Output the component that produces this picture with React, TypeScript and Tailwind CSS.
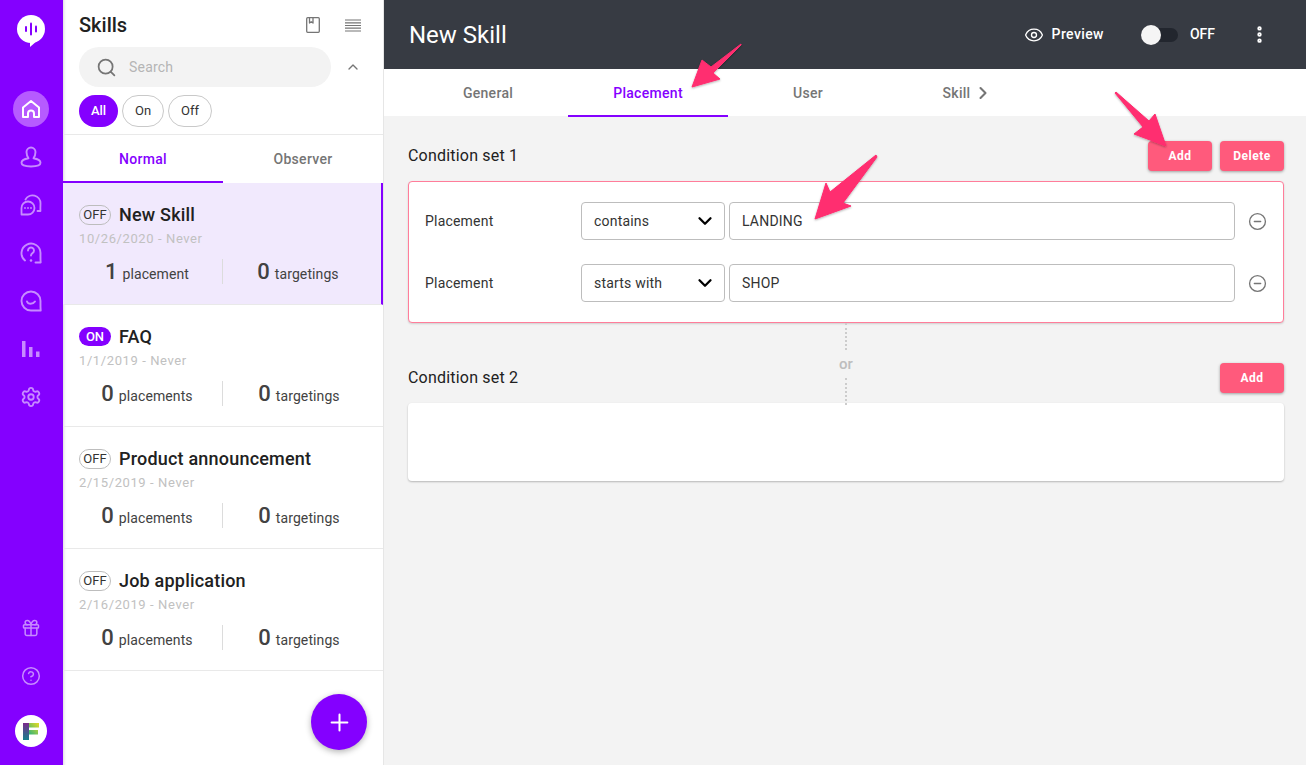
import { ChevronDown, ChevronRight, ChevronUp, CircleHelp, Eye, Gift, MinusCircle, MoreVertical, Plus, Search, Settings } from "lucide-react";

const skills = [
  { name: "New Skill", status: "OFF", dates: "10/26/2020 - Never", label: "placement", count: 1, active: true },
  { name: "FAQ", status: "ON", dates: "1/1/2019 - Never", label: "placements", count: 0, active: false },
  { name: "Product announcement", status: "OFF", dates: "2/15/2019 - Never", label: "placements", count: 0, active: false },
  { name: "Job application", status: "OFF", dates: "2/16/2019 - Never", label: "placements", count: 0, active: false },
];

function HomeIcon() {
  return (
    <svg width="20" height="20" viewBox="0 0 20 20" fill="none" stroke="white" strokeWidth="2" strokeLinejoin="round">
      <path d="M2 8.500 10 2l8 6.500V18h-5v-3.500a3 3 0 0 0-6 0V18H2z" />
    </svg>
  );
}

function UserIcon() {
  return (
    <svg width="22" height="22" viewBox="0 0 22 22" fill="none" stroke="#c78bff" strokeWidth="1.900" strokeLinejoin="round">
      <path d="M6.500 6a4.500 4.500 0 0 1 9 0c0 2.500-.8 4.500-2 6.200 3.500.6 7 1.800 7 4.600 0 2.200-3 3.700-9.500 3.700s-9.500-1.500-9.500-3.700c0-2.800 3.500-4 7-4.600-1.200-1.700-2-3.700-2-6.200z" />
    </svg>
  );
}

function ChatsIcon() {
  return (
    <svg width="22" height="22" viewBox="0 0 22 22" fill="none" stroke="#c78bff" strokeWidth="1.800" strokeLinecap="round" strokeLinejoin="round">
      <path d="M5.500 5.500a8 8 0 0 1 15 4c0 2.500-.3 5 0 7.500h-3" />
      <path d="M8 7.500a6.500 6.500 0 1 1 0 13H1.500v-6.500A6.500 6.500 0 0 1 8 7.500z" />
      <path d="M5 14h.01M8 14h.01M11 14h.01" strokeWidth="1.800" />
    </svg>
  );
}

function QuestionBubbleIcon() {
  return (
    <svg width="22" height="22" viewBox="0 0 22 22" fill="none" stroke="#c78bff" strokeWidth="1.900" strokeLinecap="round" strokeLinejoin="round">
      <path d="M5 18.500A9.500 9.500 0 1 1 20.500 11c0 3-.2 6 .2 9.500H15.500" />
      <path d="M8 8.500a3 3 0 1 1 4.500 2.600c-1 .6-1.500 1.200-1.500 2.400" />
      <path d="M11 18.500h.01" strokeWidth="2.600" />
    </svg>
  );
}

function SmileBubbleIcon() {
  return (
    <svg width="22" height="22" viewBox="0 0 22 22" fill="none" stroke="#c78bff" strokeWidth="1.900" strokeLinecap="round" strokeLinejoin="round">
      <path d="M11 20.500A9.500 9.500 0 1 1 20.500 11c0 3-.2 6 .2 9.500z" />
      <path d="M7 11.500c1 3 6 3 8 0" />
    </svg>
  );
}

function BarsIcon() {
  return (
    <svg width="18" height="16" viewBox="0 0 18 16" fill="#c78bff">
      <rect x="0" y="0" width="3.500" height="16" />
      <rect x="7" y="6" width="3.500" height="10" />
      <rect x="14" y="10.500" width="3.500" height="5.500" />
    </svg>
  );
}

function NotebookIcon() {
  return (
    <svg width="14" height="16" viewBox="0 0 14 16" fill="none" stroke="#757575" strokeWidth="1.300">
      <rect x="0.700" y="0.700" width="12.600" height="14.600" rx="1" />
      <path d="M3.500 1v5l1.700-1.300L7 6V1" strokeLinejoin="round" />
    </svg>
  );
}

function LinesIcon() {
  return (
    <svg width="16" height="13" viewBox="0 0 16 13" stroke="#757575" strokeWidth="1.200">
      <path d="M0 1h16M0 3.800h16M0 6.500h16M0 9.200h16M0 12h16" />
    </svg>
  );
}

function Arrows() {
  return (
    <svg className="absolute left-0 top-0 pointer-events-none" width="1306" height="765" viewBox="0 0 1306 765">
      <defs>
        <filter id="arrowShadow" x="-20%" y="-20%" width="140%" height="140%">
          <feDropShadow dx="0" dy="1" stdDeviation="1.200" floodColor="#000" floodOpacity="0.3" />
        </filter>
      </defs>
      <g fill="#ff2d6f" filter="url(#arrowShadow)" stroke="#ff2d6f" strokeWidth="1" strokeLinejoin="round">
        <path d="M741 44 711 67 702 60 692 87 720 79 713 73 741 45z" />
        <path d="M1115 93 1143 127 1134 134 1166 146 1155 114 1149 121 1116 92z" />
        <path d="M876 155 830 192 826 183 815 219 851 206 843 203 877 157z" />
      </g>
    </svg>
  );
}

function ConditionRow({ op, value }: { op: string; value: string }) {
  return (
    <div className="flex items-center h-[38px]">
      <div className="w-[156px] text-[14px] tracking-[0.2px] text-[#333]">Placement</div>
      <div className="w-[144px] h-[38px] border border-[#bdbdbd] rounded-[4px] bg-white flex items-center justify-between pl-3 pr-[8px] text-[14px] tracking-[0.2px] text-[#333]">
        {op}
        <ChevronDown className="w-[22px] h-[22px] text-black" strokeWidth={2.500} />
      </div>
      <div className="ml-1 w-[506px] h-[38px] border border-[#bdbdbd] rounded-[4px] bg-white flex items-center pl-3 text-[14px] tracking-[0.2px] text-[#333]">
        {value}
      </div>
      <MinusCircle className="ml-[13px] w-[19px] h-[19px] text-[#757575]" strokeWidth={1.700} />
    </div>
  );
}

function PinkButton({ label }: { label: string }) {
  return (
    <button className="w-[64px] h-[30px] rounded-[4px] bg-[#ff5a7c] text-white text-[12px] font-bold tracking-[0.5px] shadow-[0_1px_3px_rgba(0,0,0,0.35)]">
      {label}
    </button>
  );
}

export default function App() {
  return (
    <div className="relative flex w-[1306px] h-[765px] overflow-hidden bg-[#f3f3f3] font-['Roboto',sans-serif]">
      {/* rail */}
      <nav className="w-[63px] shrink-0 bg-[#8400ff] pr-px flex flex-col items-center">
        <div className="mt-[15px]">
          <svg width="28" height="32" viewBox="0 0 28 32">
            <circle cx="14" cy="14" r="14" fill="white" />
            <path d="M13 26v6l8-7z" fill="white" />
            <rect x="8" y="11" width="2" height="6" rx="1" fill="#8400ff" />
            <rect x="13" y="7.500" width="2" height="13" rx="1" fill="#8400ff" />
            <rect x="18" y="10.500" width="2" height="7" rx="1" fill="#8400ff" />
          </svg>
        </div>
        <div className="mt-[44px] w-9 h-9 rounded-full bg-[#b65bff] flex items-center justify-center">
          <HomeIcon />
        </div>
        <div className="mt-[19px] flex flex-col items-center gap-[26px]">
          <UserIcon />
          <ChatsIcon />
          <QuestionBubbleIcon />
          <SmileBubbleIcon />
          <div className="h-[22px] flex items-center">
            <BarsIcon />
          </div>
          <Settings className="w-[22px] h-[22px] text-[#c78bff]" strokeWidth={2} />
        </div>
        <div className="mt-auto flex flex-col items-center">
          <Gift className="w-[20px] h-[20px] text-[#c78bff]" strokeWidth={1.800} />
          <CircleHelp className="mt-[28px] w-[20px] h-[20px] text-[#c78bff]" strokeWidth={1.800} />
          <div className="mt-[29px] mb-[18px] w-8 h-8 rounded-full bg-white flex items-center justify-center">
            <svg width="16" height="17" viewBox="0 0 16 17">
              <defs>
                <linearGradient id="logoStem" x1="0" y1="0" x2="0" y2="1">
                  <stop offset="0" stopColor="#7a2a8c" />
                  <stop offset="1" stopColor="#14808c" />
                </linearGradient>
                <linearGradient id="logoArm" x1="0" y1="1" x2="1" y2="0">
                  <stop offset="0" stopColor="#2fb37a" />
                  <stop offset="1" stopColor="#e8dc22" />
                </linearGradient>
              </defs>
              <path d="M6 0h10v4.500H6V7h9v4.500H6z" fill="url(#logoArm)" />
              <path d="M0 0h6v17H0z" fill="url(#logoStem)" />
            </svg>
          </div>
        </div>
      </nav>

      {/* skills list */}
      <aside className="relative w-[321px] shrink-0 bg-white border-r border-[#e6e6e6] flex flex-col shadow-[inset_4px_0_3px_-3px_rgba(0,0,0,0.15)]">
        <div className="h-[47px] pt-[3px] flex items-center justify-between pl-4 pr-[22px]">
          <div className="text-[20px] font-medium text-[#212121] leading-none">Skills</div>
          <div className="flex items-center gap-[25px]">
            <NotebookIcon />
            <LinesIcon />
          </div>
        </div>
        <div className="flex items-center pl-4">
          <div className="w-[252px] h-10 rounded-[20px] bg-[#f3f3f3] flex items-center pl-[17px]">
            <Search className="w-[21px] h-[21px] text-[#757575]" strokeWidth={2} />
            <span className="ml-[12px] text-[14px] text-[#b5b5b5] tracking-[0.2px]">Search</span>
          </div>
          <ChevronUp className="ml-[14px] w-[16px] h-[16px] text-[#757575]" strokeWidth={2} />
        </div>
        <div className="mt-2 flex gap-1 pl-4 h-8">
          <div className="w-[39px] rounded-full flex items-center justify-center text-[13px] font-medium bg-[#8400ff] text-white">All</div>
          <div className="w-[42px] rounded-full border border-[#c9c9c9] flex items-center justify-center text-[13px] text-[#333]">On</div>
          <div className="w-[44px] rounded-full border border-[#c9c9c9] flex items-center justify-center text-[13px] text-[#333]">Off</div>
        </div>
        <div className="mt-[7px] border-t border-[#e9e9e9] h-[49px] flex">
          <div className="w-[160px] h-[48px] pt-[2px] border-b-2 border-[#8400ff] flex items-center justify-center text-[14px] font-medium tracking-[0.3px] text-[#8400ff]">Normal</div>
          <div className="flex-1 flex items-center justify-center text-[14px] font-medium tracking-[0.3px] text-[#757575]">Observer</div>
        </div>
        {skills.map((s) => (
          <div key={s.name} className={`h-[122px] border-b border-[#e9e9e9] pl-4 flex flex-col ${s.active ? "bg-[#f1e9fd] border-r-2 border-r-[#8400ff]" : ""}`}>
            <div className="mt-[21px] flex items-center h-[21px]">
              {s.status === "ON" ? (
                <div className="w-8 h-[19px] rounded-full bg-[#8400ff] text-white text-[13px] font-medium flex items-center justify-center">ON</div>
              ) : (
                <div className="w-8 h-[20px] rounded-full border border-[#bdbdbd] text-[#333] text-[13px] flex items-center justify-center">OFF</div>
              )}
              <div className="ml-2 text-[18px] font-medium tracking-[0.2px] text-[#212121] leading-none">{s.name}</div>
            </div>
            <div className="mt-[7px] text-[13px] tracking-[0.6px] text-[#c1c1c1] leading-[14px]">{s.dates}</div>
            <div className="mt-[12px] flex items-center h-[26px] -ml-4">
              <div className="w-[159px] pl-[9px] flex items-baseline justify-center text-[#424242]">
                <span className="text-[22px] font-medium">{s.count}</span>
                <span className="ml-[5px] text-[14px] tracking-[0.1px]">{s.label}</span>
              </div>
              <div className="w-px h-[25px] bg-[#dcdcdc]" />
              <div className="flex-1 pr-[8px] flex items-baseline justify-center text-[#424242]">
                <span className="text-[22px] font-medium">0</span>
                <span className="ml-[5px] text-[14px] tracking-[0.1px]">targetings</span>
              </div>
            </div>
          </div>
        ))}
        <button className="absolute left-[248px] top-[694px] w-14 h-14 rounded-full bg-[#8400ff] flex items-center justify-center shadow-[0_2px_6px_rgba(0,0,0,0.3)]">
          <Plus className="w-[27px] h-[27px] text-white" strokeWidth={1.800} />
        </button>
      </aside>

      {/* main */}
      <main className="flex-1 flex flex-col">
        <header className="h-[69px] bg-[#373b43] flex items-center pl-[25px] pr-[36px]">
          <div className="text-[24px] text-white leading-none">New Skill</div>
          <div className="ml-auto flex items-center">
            <Eye className="w-[20px] h-[20px] text-white" strokeWidth={1.600} />
            <span className="ml-[8px] text-[14px] font-medium tracking-[0.4px] text-white">Preview</span>
            <div className="ml-[37px] relative w-[37px] h-[14px] rounded-full bg-[#22262e]">
              <div className="absolute left-0 -top-[3px] w-5 h-5 rounded-full bg-[#f5f5f5]" />
            </div>
            <span className="ml-[12px] text-[14px] font-medium text-white">OFF</span>
            <MoreVertical className="ml-[34px] w-[21px] h-[21px] text-white" strokeWidth={3} />
          </div>
        </header>
        <div className="h-[47px] bg-white flex text-[14px] font-medium tracking-[0.3px]">
          <div className="w-[184px] h-[48px] pl-[24px] flex items-center justify-center text-[#757575]">General</div>
          <div className="w-[160px] h-[48px] pt-[2px] border-b-2 border-[#8400ff] flex items-center justify-center text-[#8400ff]">Placement</div>
          <div className="w-[160px] h-[48px] flex items-center justify-center text-[#757575]">User</div>
          <div className="w-[160px] h-[48px] flex items-center justify-center text-[#757575]">
            Skill
            <ChevronRight className="ml-[3px] w-[20px] h-[20px]" strokeWidth={2.500} />
          </div>
        </div>
        <div className="pl-[24px] pr-[22px] flex flex-col">
          <div className="mt-[25px] h-[30px] flex items-center justify-between">
            <div className="text-[16px] tracking-[0.2px] text-[#212121]">Condition set 1</div>
            <div className="flex gap-2">
              <PinkButton label="Add" />
              <PinkButton label="Delete" />
            </div>
          </div>
          <div className="mt-[10px] h-[142px] border border-[#ff7d9a] rounded-[4px] bg-white pl-4 pt-[20px] flex flex-col gap-6 shadow-[0_1px_2px_rgba(0,0,0,0.15)]">
            <ConditionRow op="contains" value="LANDING" />
            <ConditionRow op="starts with" value="SHOP" />
          </div>
          <div className="relative h-[40px]">
            <div className="absolute left-[437px] top-0 h-[27px] border-l-2 border-dotted border-[#cccccc]" />
            <div className="absolute left-[431px] top-[34px] text-[15px] font-medium text-[#bdbdbd] leading-none">or</div>
            <div className="absolute left-[437px] top-[55px] h-[27px] border-l-2 border-dotted border-[#cccccc]" />
          </div>
          <div className="h-[30px] flex items-center justify-between">
            <div className="text-[16px] tracking-[0.2px] text-[#212121]">Condition set 2</div>
            <PinkButton label="Add" />
          </div>
          <div className="mt-[10px] h-[78px] rounded-[4px] bg-white shadow-[0_1px_2px_rgba(0,0,0,0.25)]" />
        </div>
      </main>

      <Arrows />
    </div>
  );
}
